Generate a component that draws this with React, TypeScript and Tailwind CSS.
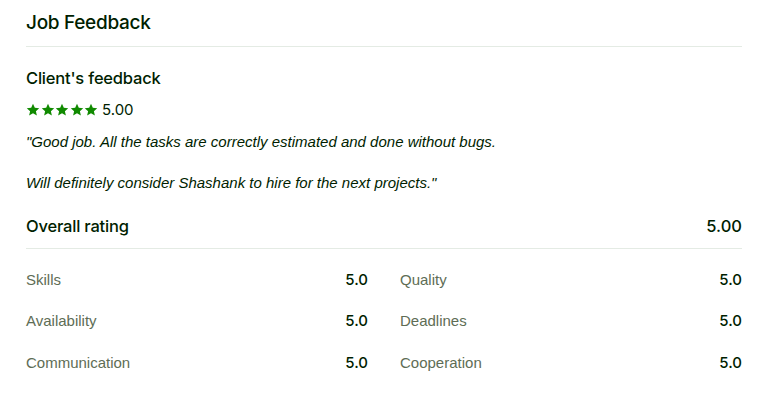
import React from "react";

const Star = () => (
  <svg width="14" height="14" viewBox="0 0 24 24" fill="#108a00">
    <path d="M12 1.2l3.1 7 7.6.7-5.75 5.05 1.7 7.55L12 17.55 5.35 21.5l1.7-7.55L1.3 8.9l7.6-.7z" />
  </svg>
);

const inter = { fontFamily: 'Inter, "Liberation Sans", sans-serif' };

const Row = ({ label, value }: { label: string; value: string }) => (
  <div className="flex items-center justify-between h-[41.5px]">
    <span className="text-[15px] text-[#5e6d55]">{label}</span>
    <span className="text-[15px] font-medium text-[#001e00]" style={inter}>
      {value}
    </span>
  </div>
);

export default function App() {
  return (
    <div
      className="bg-white w-[768px] h-[412px] px-[26px] text-[#001e00]"
      style={{ fontFamily: '"Liberation Sans", Arial, sans-serif' }}
    >
      <div className="pt-[10px] pb-[10px] border-b border-[#e4ebe4]">
        <h2 className="text-[19px] leading-[26px] font-medium tracking-[-0.3px]" style={inter}>
          Job Feedback
        </h2>
      </div>
      <h3 className="mt-[19px] text-[16.5px] leading-[24px] font-medium tracking-[-0.2px]" style={inter}>
        Client's feedback
      </h3>
      <div className="mt-[10px] flex items-center gap-[4px]">
        <div className="flex gap-[0.5px]">
          <Star />
          <Star />
          <Star />
          <Star />
          <Star />
        </div>
        <span className="text-[15px] leading-[20px]" style={inter}>
          5.00
        </span>
      </div>
      <div className="mt-[11px] italic text-[15px] leading-[21px]">
        <p>"Good job. All the tasks are correctly estimated and done without bugs.</p>
        <p className="mt-[20px]">Will definitely consider Shashank to hire for the next projects."</p>
      </div>
      <div className="mt-[21px] flex items-center justify-between pb-[10px] border-b border-[#e4ebe4]">
        <span className="text-[16.5px] leading-[24px] font-medium tracking-[-0.2px]" style={inter}>
          Overall rating
        </span>
        <span className="text-[16.5px] leading-[24px] font-medium" style={inter}>
          5.00
        </span>
      </div>
      <div className="mt-[10px] grid grid-cols-2 gap-x-[32px]">
        <div>
          <Row label="Skills" value="5.0" />
          <Row label="Availability" value="5.0" />
          <Row label="Communication" value="5.0" />
        </div>
        <div>
          <Row label="Quality" value="5.0" />
          <Row label="Deadlines" value="5.0" />
          <Row label="Cooperation" value="5.0" />
        </div>
      </div>
    </div>
  );
}
